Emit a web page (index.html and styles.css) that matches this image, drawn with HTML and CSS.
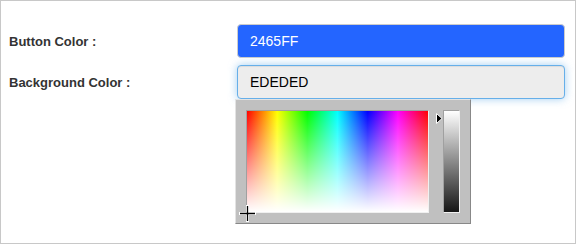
FILE: index.html
```html
<!DOCTYPE html>
<html lang="en">
<head>
    <meta charset="UTF-8">
    <meta name="viewport" content="width=device-width, initial-scale=1.0">
    <title>Color Settings</title>
    <link rel="stylesheet" href="styles.css">
</head>
<body>
    <div class="panel">
        <div class="form-row">
            <label for="button-color">Button Color :</label>
            <input type="text" id="button-color" class="form-control color-blue" value="2465FF">
        </div>

        <div class="form-row">
            <label for="bg-color">Background Color :</label>
            <div class="field">
                <input type="text" id="bg-color" class="form-control color-grey focus" value="EDEDED">

                <!-- picker popup -->
                <div class="picker">
                    <div class="hs">
                        <svg class="cross" width="17" height="17" viewBox="0 0 17 17">
                            <path d="M0 8.5H17M8.5 0V17" stroke="#fff" stroke-width="3"/>
                            <path d="M1 8.5H16M8.5 1V16" stroke="#000" stroke-width="1.3"/>
                        </svg>
                    </div>
                    <div class="slider">
                        <svg class="arrow" width="7" height="11" viewBox="0 0 7 11">
                            <path d="M0.5 0.5L6 5.5L0.5 10.5Z" fill="#000" stroke="#fff" stroke-width="1"/>
                        </svg>
                    </div>
                </div>
            </div>
        </div>
    </div>
</body>
</html>
```

FILE: styles.css
```css
* { margin: 0; padding: 0; box-sizing: border-box; }
body { font-family: "Liberation Sans", Arial, sans-serif; background: #fff; }
.panel {
    width: 576px;
    height: 244px;
    border: 1px solid #c8c8c8;
    padding: 23px 10px 0 8px;
    display: flex;
    flex-direction: column;
    gap: 7px;
}
.form-row {
    display: grid;
    grid-template-columns: 228px 1fr;
    align-items: center;
}
.form-row label {
    font-size: 13px;
    font-weight: bold;
    color: #333;
}
.field { position: relative; }
.form-control {
    display: block;
    width: 100%;
    height: 34px;
    padding: 6px 12px;
    font-family: "Liberation Sans", Arial, sans-serif;
    font-size: 14px;
    border: 1px solid #ccc;
    border-radius: 4px;
    outline: none;
}
.color-blue { background-color: #2465ff; color: #fff; }
.color-grey { background-color: #ededed; color: #000; }
.focus {
    border-color: #66afe9;
    box-shadow: inset 0 1px 1px rgba(0,0,0,.075), 0 0 8px rgba(102,175,233,.6);
}
.picker {
    position: absolute;
    top: 100%;
    left: -2px;
    display: flex;
    padding: 10px;
    background: #c0c0c0;
    border: 1px solid;
    border-color: #e3e3e3 #888 #888 #e3e3e3;
}
.hs {
    position: relative;
    width: 183px;
    height: 103px;
    border: 1px solid;
    border-color: #a0a0a0 #f0f0f0 #f0f0f0 #a0a0a0;
    background:
        linear-gradient(to bottom, rgba(255,255,255,0), #fff),
        linear-gradient(to right, #f00, #ff0, #0f0, #0ff, #00f, #f0f, #f00);
}
.cross {
    position: absolute;
    left: -8px;
    top: 94px;
}
.slider {
    position: relative;
    width: 17px;
    height: 103px;
    margin-left: 14px;
    border: 1px solid;
    border-color: #a0a0a0 #f0f0f0 #f0f0f0 #a0a0a0;
    background: linear-gradient(to bottom, #fff, #161616);
}
.arrow {
    position: absolute;
    left: -8px;
    top: 2px;
}
```
